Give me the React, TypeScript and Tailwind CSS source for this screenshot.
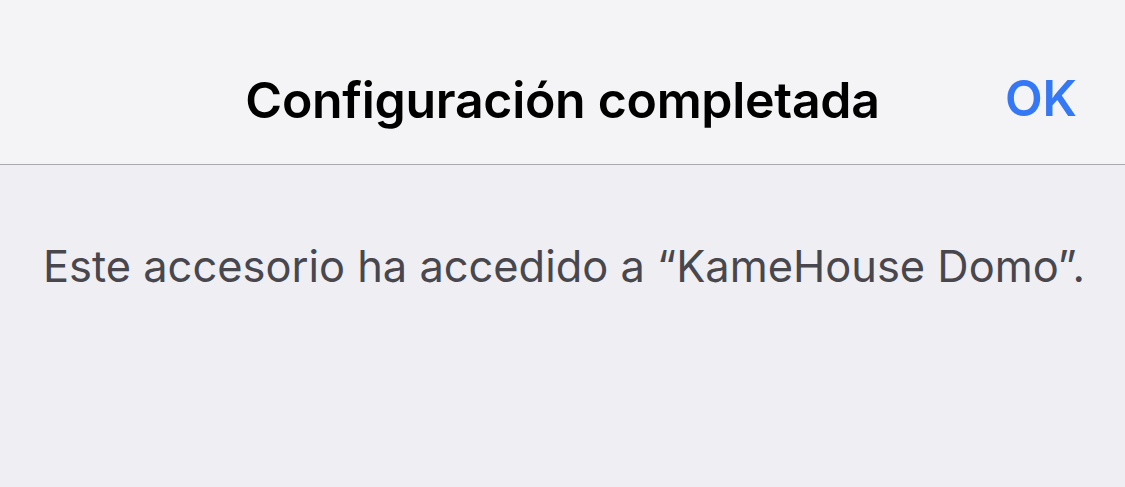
export default function App() {
  return (
    <div className="w-[1125px] h-[487px] bg-[#efeef3] flex flex-col" style={{ fontFamily: 'Inter, "Noto Sans", sans-serif' }}>
      <div className="h-[165px] bg-[#f4f4f6] border-b border-[#a9a9ad] relative flex items-center justify-center">
        <div className="text-[50px] font-semibold text-black tracking-[-0.3px] pt-[36px]">Configuración completada</div>
        <div className="absolute right-[48px] top-0 h-full flex items-center pt-[34px] text-[49px] font-semibold text-[#3478f6]">OK</div>
      </div>
      <div className="pt-[80px] pl-[43px] text-[43.4px] text-[#48474d] leading-none">
        Este accesorio ha accedido a “KameHouse Domo”.
      </div>
    </div>
  );
}
